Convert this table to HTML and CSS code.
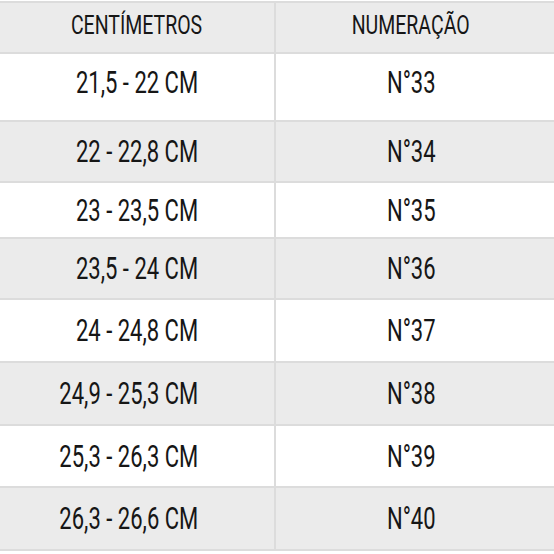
FILE: index.html
```html
<!DOCTYPE html>
<html lang="pt">
<head>
<meta charset="utf-8">
<title>Tabela de medidas</title>
<link rel="stylesheet" href="styles.css">
</head>
<body>
<div class="size-table">
  <div class="row head">
    <div class="cell"><span class="txt">CENTÍMETROS</span></div>
    <div class="cell"><span class="txt">NUMERAÇÃO</span></div>
  </div>
  <div class="row r1">
    <div class="cell"><span class="txt">21,5 - 22 CM</span></div>
    <div class="cell"><span class="txt">N°33</span></div>
  </div>
  <div class="row r2 alt">
    <div class="cell"><span class="txt">22 - 22,8 CM</span></div>
    <div class="cell"><span class="txt">N°34</span></div>
  </div>
  <div class="row r3">
    <div class="cell"><span class="txt">23 - 23,5 CM</span></div>
    <div class="cell"><span class="txt">N°35</span></div>
  </div>
  <div class="row r4 alt">
    <div class="cell"><span class="txt">23,5 - 24 CM</span></div>
    <div class="cell"><span class="txt">N°36</span></div>
  </div>
  <div class="row r5">
    <div class="cell"><span class="txt">24 - 24,8 CM</span></div>
    <div class="cell"><span class="txt">N°37</span></div>
  </div>
  <div class="row r6 alt">
    <div class="cell wide"><span class="txt">24,9 - 25,3 CM</span></div>
    <div class="cell"><span class="txt">N°38</span></div>
  </div>
  <div class="row r7">
    <div class="cell wide"><span class="txt">25,3 - 26,3 CM</span></div>
    <div class="cell"><span class="txt">N°39</span></div>
  </div>
  <div class="row r8 alt">
    <div class="cell wide"><span class="txt">26,3 - 26,6 CM</span></div>
    <div class="cell"><span class="txt">N°40</span></div>
  </div>
</div>
</body>
</html>
```

FILE: styles.css
```css
html, body {
  margin: 0;
  padding: 0;
  background: #ffffff;
}

.size-table {
  margin-top: 1px;
  border-top: 2px solid #dcdcdc;
  font-family: Roboto, "Liberation Sans", sans-serif;
  color: #161616;
}

.row {
  display: grid;
  grid-template-columns: 276px 1fr;
  border-bottom: 2px solid #dcdcdc;
  background: #ffffff;
}

.row.alt,
.row.head {
  background: #ebebeb;
}

.cell {
  display: flex;
  align-items: center;
  justify-content: center;
  box-sizing: border-box;
}

.cell:first-child {
  border-right: 2px solid #dcdcdc;
}

.cell:last-child {
  padding-right: 8px;
}

.cell.wide {
  padding-right: 16px;
}

.txt {
  display: inline-block;
  white-space: nowrap;
  font-size: 31px;
  line-height: 1;
  transform: scaleX(0.71);
}

.head .txt {
  font-size: 26px;
  transform: scaleX(0.75);
}

.head { height: 49px; }
.head .cell { padding-bottom: 6px; }
.r1 { height: 66px; }
.r1 .cell { padding-bottom: 10px; }
.r2 { height: 59px; }
.r3 { height: 54px; }
.r4 { height: 59px; }
.r5 { height: 61px; }
.r6 { height: 61px; }
.r7 { height: 60px; }
.r8 { height: 61px; }
```
